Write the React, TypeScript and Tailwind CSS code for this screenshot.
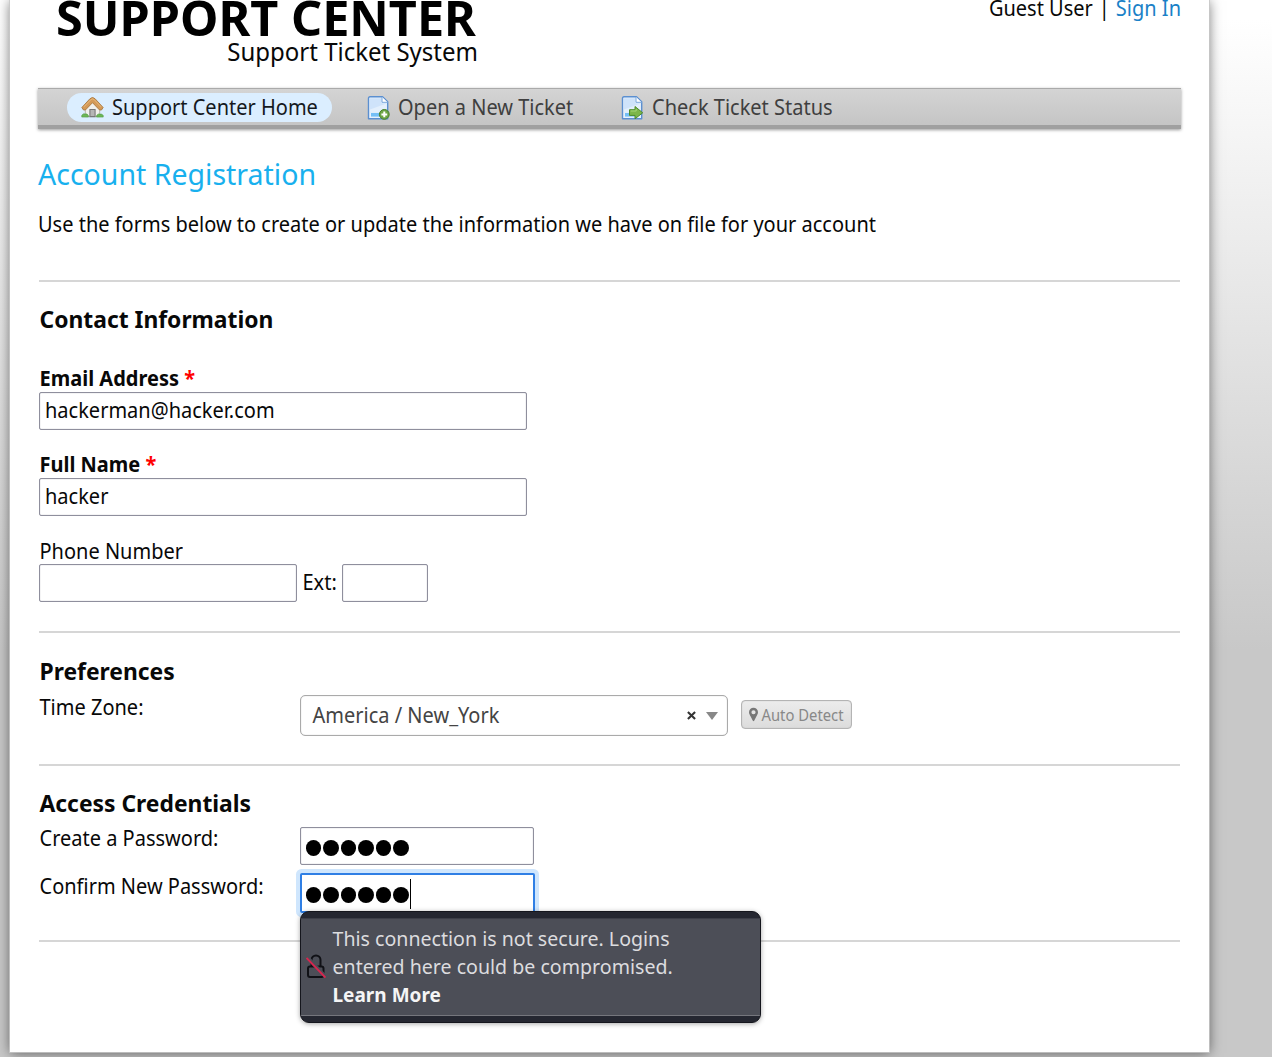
import React from "react";

type TProps = { children: React.ReactNode; className?: string; size?: string };

function T({ children, className = "", size = "text-[20px] leading-[26px]" }: TProps) {
  return (
    <span className={`block origin-center scale-y-[1.05] whitespace-nowrap ${size} ${className}`}>
      {children}
    </span>
  );
}

function Rule({ className = "" }: { className?: string }) {
  return <hr className={`ml-px mr-px h-[2px] border-0 bg-[#d6d6d6] ${className}`} />;
}

function HomeIcon() {
  return (
    <svg viewBox="0 0 24 24" className="h-[23px] w-[23px] shrink-0">
      <path d="M4.500 12 12 5l7.500 7v9.500h-15z" fill="#f1f0ec" stroke="#a8a49a" strokeWidth=".8" />
      <path d="M9.300 21.500v-7.500h5.400v7.500z" fill="#b5b5b5" stroke="#777" strokeWidth="1.100" />
      <path d="M.9 12 9.300 2.900Q12 .2 14.700 2.900L23.100 12l-1.700 2.600h-2L12 7l-7.400 7.600h-2z" fill="#d49a58" stroke="#a8763c" strokeWidth=".9" strokeLinejoin="round" />
      <path d="M3 11.300 10.500 3.600q1.500-1.200 3 0L21 11.300" fill="none" stroke="#e8bb80" strokeWidth="1" />
      <path d="M.8 22v-1.800q1.600-2.400 3.500-1.400 2.200-.8 3.400 1.600V22zM16.300 22v-1.700q1.500-2.200 3.400-1.400 2.500-.6 3.500 1.500V22z" fill="#6db657" stroke="#4b9a40" strokeWidth=".6" />
    </svg>
  );
}

function Page() {
  return (
    <>
      <path d="M3 .8h12.500l5.200 5v17H1.500V2.300Q1.500.8 3 .8Z" fill="#e6f1fd" stroke="#5b8fd0" strokeWidth="1.400" strokeLinejoin="round" />
      <path d="M3 2.300h11.500v5h5v9.200H3z" fill="#cfe3fa" />
      <path d="M3 13.500 19.500 7.500v9H3z" fill="#e3effc" />
      <path d="M15 1v5.300h5.500" fill="#fff" stroke="#79a7dd" strokeWidth="1" />
      <path d="M4 17h10v3.600H4z" fill="#74bff6" />
    </>
  );
}

function NewTicketIcon() {
  return (
    <svg viewBox="0 0 24 24" className="h-6 w-6 shrink-0">
      <Page />
      <circle cx="17.300" cy="18.400" r="4.900" fill="#6da545" stroke="#47802a" strokeWidth="1" />
      <path d="M17.300 15.500v5.800M14.400 18.400h5.800" stroke="#fff" strokeWidth="2" />
    </svg>
  );
}

function StatusIcon() {
  return (
    <svg viewBox="0 0 24 24" className="h-6 w-6 shrink-0">
      <Page />
      <path d="M8.500 13.700H14v-3.200l7.700 6.300-7.700 6v-3.400H8.500z" fill="#7cb64a" stroke="#4d8a2b" strokeWidth="1" strokeLinejoin="round" />
      <path d="M9.700 15h5.500v-2" fill="none" stroke="#a5d678" strokeWidth="1" />
    </svg>
  );
}

function Field({ children, className = "" }: { children?: React.ReactNode; className?: string }) {
  return (
    <div className={`flex h-[38px] shrink-0 items-center rounded-[2px] border border-[#8f8f9d] bg-white pl-[5px] shadow-[inset_0_0_1px_#8f8f9d] ${className}`}>
      {children}
    </div>
  );
}

function Dots({ caret = false }: { caret?: boolean }) {
  return (
    <div className="mt-[3px] flex items-center gap-[2px]">
      {[0, 1, 2, 3, 4, 5].map((i) => (
        <span key={i} className="h-[16px] w-[15.500px] rounded-full bg-black" />
      ))}
      {caret && <span className="-ml-px -mt-[2px] h-[30px] w-px bg-black" />}
    </div>
  );
}

function InsecureTip() {
  return (
    <div className="absolute left-0 top-[38px] z-10 flex h-[112px] w-[461px] flex-col overflow-hidden rounded-[9px] border border-[#15161d] bg-[#252731] pb-[6px] pt-[6px] shadow-[0_1px_5px_rgba(0,0,0,0.35)]">
      <div className="flex flex-1 items-center border-b border-t border-b-[#75767d] border-t-[#3c3e48] bg-[#4c4e57] pl-[5px]">
        <svg viewBox="0 0 20 26" className="h-[26px] w-5 shrink-0" fill="none">
          <path d="M5.500 12V6a4.500 4.500 0 0 1 9 0v6" stroke="#101116" strokeWidth="2" />
          <rect x="2" y="12.500" width="15.500" height="10.500" rx="2" stroke="#101116" strokeWidth="2" />
          <path d="m1 3 18.500 19.500" stroke="#4c4e57" strokeWidth="3.600" />
          <path d="m.5 4 19 19.500" stroke="#d7264f" strokeWidth="1.900" />
        </svg>
        <div className="ml-[7px] text-[#dcdcdf]">
          <T size="text-[19.600px] leading-[28px]">This connection is not secure. Logins</T>
          <T size="text-[19.600px] leading-[28px]">entered here could be compromised.</T>
          <T size="text-[19px] leading-[28px]" className="font-bold text-[#f5f5f5]">Learn More</T>
        </div>
      </div>
    </div>
  );
}

export default function App() {
  return (
    <div className="h-[1057px] w-[1272px] overflow-hidden bg-[linear-gradient(#fff_20px,#c8c8c8_650px)] font-['Noto_Sans',sans-serif] text-[#080808]">
      <main className="ml-[10px] flex h-[1052px] w-[1199px] flex-col bg-white px-[28px] shadow-[0_0_0_1px_rgba(200,200,200,0.8),0_1px_12px_rgba(0,0,0,0.55)]">
        <header className="flex h-[88px] shrink-0 items-start justify-between">
          <div className="-mt-[3px] flex w-[440px] flex-col items-end">
            <span className="mr-[2px] whitespace-nowrap text-[48.600px] font-bold leading-[40px] text-black">SUPPORT CENTER</span>
            <T size="text-[24px] leading-[29px]">Support Ticket System</T>
          </div>
          <div className="flex gap-[6px]">
            <T size="text-[20px] leading-[18px]">Guest User</T>
            <T size="text-[20px] leading-[18px]">|</T>
            <T size="text-[20px] leading-[18px]" className="text-[#1a81c7]">Sign In</T>
          </div>
        </header>

        <nav className="flex h-[41px] shrink-0 items-start border-b-[4px] border-t border-b-[#a0a0a0] border-t-[#aaa] bg-gradient-to-b from-[#d4d4d4] to-[#c5c5c5] pt-1 text-[#3f3f3f] shadow-[0_1px_3px_rgba(0,0,0,0.4)]">
          <div className="ml-[29px] flex h-[29px] w-[265px] items-center gap-2 rounded-full bg-[#dbeeff] pl-[14px] text-[#15191d]">
            <HomeIcon />
            <T>Support Center Home</T>
          </div>
          <div className="ml-[35px] flex h-[29px] w-[206px] items-center gap-[7px]">
            <NewTicketIcon />
            <T>Open a New Ticket</T>
          </div>
          <div className="ml-[48px] flex h-[29px] items-center gap-[7px]">
            <StatusIcon />
            <T>Check Ticket Status</T>
          </div>
        </nav>

        <h1 className="mt-1 h-[80px] whitespace-nowrap text-[28.500px] leading-[83px] text-[#18b0ee]">Account Registration</h1>
        <T size="text-[20px] leading-[24px]">
          Use the forms below to create or update the information we have on file for your account
        </T>
        <Rule className="mt-[43px]" />

        <section className="pl-[1.500px]">
          <h2 className="mt-[23px] text-[22.850px] font-bold leading-[30px]">Contact Information</h2>
          <T className="mt-[31px] font-bold">Email Address <span className="text-[#f00]">*</span></T>
          <Field className="-ml-[0.500px] w-[488px]"><T>hackerman@hacker.com</T></Field>
          <T className="mt-[22px] font-bold">Full Name <span className="text-[#f00]">*</span></T>
          <Field className="-ml-[0.500px] w-[488px]"><T>hacker</T></Field>
          <T className="mt-[23px] mb-[-1px]">Phone Number</T>
          <div className="-ml-[0.500px] flex items-center">
            <Field className="w-[258px]" />
            <T className="w-[45px] pl-[5.500px]">Ext:</T>
            <Field className="w-[86px]" />
          </div>
        </section>
        <Rule className="mt-[29px]" />

        <section className="pl-[1.500px]">
          <h2 className="mt-6 text-[22.850px] font-bold leading-[30px]">Preferences</h2>
          <div className="mt-[7px] flex h-[42px] items-start">
            <T className="mt-px w-[260px]">Time Zone:</T>
            <div className="flex h-[41px] w-[428px] items-center self-end rounded-[5px] border border-[#aaa] bg-white pl-3 text-[#444] shadow-[inset_0_0_1px_#aaa]">
              <T className="flex-1">America / New_York</T>
              <svg viewBox="0 0 10 10" className="h-[9px] w-[9px]"><path d="m1 1 8 8m0-8-8 8" stroke="#333" strokeWidth="2.300" /></svg>
              <svg viewBox="0 0 12 8" className="ml-[10px] mr-[9px] h-2 w-3"><path d="M0 0h12L6 8z" fill="#888" /></svg>
            </div>
            <div className="ml-[13px] mt-[6px] flex h-[29px] w-[111px] items-center rounded-[4px] border border-[#b4b4b4] bg-gradient-to-b from-[#ececec] to-[#dcdcdc] pl-[7px] text-[#888] shadow-[inset_0_0_1px_#aaa]">
              <svg viewBox="0 0 10 15" className="mr-1 h-[15px] w-[9px] shrink-0"><path fillRule="evenodd" d="M5 0a5 5 0 0 0-5 5c0 2 1.200 3.300 2 5l2.100 4.300q.9 1.400 1.800 0L8 10c.8-1.700 2-3 2-5a5 5 0 0 0-5-5Zm0 2.700a2.300 2.300 0 1 1 0 4.600 2.300 2.300 0 0 1 0-4.600Z" fill="#777" /></svg>
              <T size="text-[14.800px] leading-[27px]"><span className="inline-block scale-y-[1.1]">Auto Detect</span></T>
            </div>
          </div>
        </section>
        <Rule className="mt-[28px]" />

        <section className="pl-[1.500px]">
          <h2 className="mt-[23px] text-[22.850px] font-bold leading-[30px]">Access Credentials</h2>
          <div className="mt-[7px] flex h-[47px] items-start">
            <T className="w-[260px]">Create a Password:</T>
            <Field className="mt-px w-[234px]"><Dots /></Field>
          </div>
          <div className="flex h-[47px] items-start">
            <T className="mt-px w-[260px]">Confirm New Password:</T>
            <div className="relative">
              <div className="flex h-[40px] w-[235px] items-center rounded-[2px] border-2 border-[#2f7fe5] bg-white pl-[4px] shadow-[0_0_0_4px_#cfe6fd]">
                <Dots caret />
              </div>
              <InsecureTip />
            </div>
          </div>
        </section>
        <Rule className="mt-[20px]" />
      </main>
    </div>
  );
}
